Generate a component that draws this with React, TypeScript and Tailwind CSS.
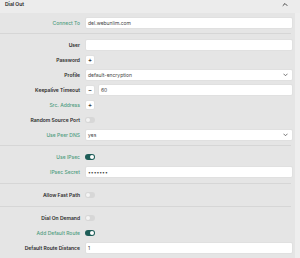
import React from "react";

const GREEN = "text-[#4f9c80] font-medium";
const DARK = "text-[#2a2a2a] font-semibold";

function Row({ label, green, children }: { label: string; green?: boolean; children: React.ReactNode }) {
  return (
    <div className="flex items-center h-[12px]">
      <div className={`w-[80px] text-right text-[5px] leading-[8px] whitespace-nowrap ${green ? GREEN : DARK}`}>{label}</div>
      <div className="ml-[5px] flex-1 flex items-center h-full">{children}</div>
    </div>
  );
}

function Input({ value, select }: { value?: string; select?: boolean }) {
  return (
    <div className="flex-1 h-[12px] bg-white rounded-[2px] border border-[#e0e0e0] flex items-center justify-between pl-[2px] pr-[4px] text-[5px] text-[#444]">
      <span className="leading-[8px]">{value}</span>
      {select && (
        <svg width="5" height="4" viewBox="0 0 10 8" className="text-[#555]">
          <path d="M1.5 2 L5 5.5 L8.5 2" fill="none" stroke="currentColor" strokeWidth="1.6" strokeLinecap="round" />
        </svg>
      )}
    </div>
  );
}

function SmallBtn({ sym }: { sym: string }) {
  return (
    <div className="w-[10px] h-[10px] bg-white rounded-[2px] border border-[#e0e0e0] flex items-center justify-center text-[6px] leading-none text-[#333] font-semibold">
      {sym}
    </div>
  );
}

function Toggle({ on }: { on?: boolean }) {
  return on ? (
    <div className="w-[10px] h-[6px] rounded-full bg-[#1e5d58] flex items-center justify-end pr-[1px]">
      <div className="w-[4px] h-[4px] rounded-full bg-white" />
    </div>
  ) : (
    <div className="w-[10px] h-[6px] rounded-full bg-[#d7d7d7] flex items-center pl-[1px]">
      <div className="w-[4px] h-[4px] rounded-full bg-[#f4f4f4]" />
    </div>
  );
}

function Sep({ wide }: { wide?: boolean }) {
  return <div className={`h-px bg-[#d6d6d6] mr-[2px] ${wide ? "mt-[5px] mb-[5px]" : "mt-[4px] mb-[5px]"}`} />;
}

export default function App() {
  return (
    <div className="w-[300px] h-[258px] overflow-hidden bg-[#ededed] flex flex-col font-['Inter',sans-serif]">
      <div className="h-[13px] flex items-start justify-between pl-[5px] pr-[12px] bg-[#ececec] shrink-0">
        <span className="text-[5px] leading-[8px] font-semibold text-[#222]">Dial Out</span>
        <svg width="6" height="5" viewBox="0 0 12 10" className="mt-[2px] text-[#444]">
          <path d="M2 7 L6 3 L10 7" fill="none" stroke="currentColor" strokeWidth="2" strokeLinecap="round" />
        </svg>
      </div>
      <div className="flex flex-1">
        <div className="w-[295px] bg-[#e5e5e5] pt-[4px] pr-[2px] flex flex-col">
          <div className="flex flex-col gap-[3px]">
            <Row label="Connect To" green><Input value="del.webunlim.com" /></Row>
          </div>
          <Sep />
          <div className="flex flex-col gap-[3px]">
            <Row label="User"><Input /></Row>
            <Row label="Password"><SmallBtn sym="+" /></Row>
            <Row label="Profile"><Input value="default-encryption" select /></Row>
            <Row label="Keepalive Timeout">
              <div className="flex items-center gap-[3px] flex-1">
                <SmallBtn sym="−" />
                <Input value="60" />
              </div>
            </Row>
            <Row label="Src. Address" green><SmallBtn sym="+" /></Row>
            <Row label="Random Source Port"><Toggle /></Row>
            <Row label="Use Peer DNS" green><Input value="yes" select /></Row>
          </div>
          <Sep />
          <div className="flex flex-col gap-[3px]">
            <Row label="Use IPsec" green><Toggle on /></Row>
            <Row label="IPsec Secret" green><Input value="•••••••" /></Row>
          </div>
          <Sep wide />
          <div className="flex flex-col gap-[3px]">
            <Row label="Allow Fast Path"><Toggle /></Row>
          </div>
          <Sep wide />
          <div className="flex flex-col gap-[3px]">
            <Row label="Dial On Demand"><Toggle /></Row>
            <Row label="Add Default Route" green><Toggle on /></Row>
            <Row label="Default Route Distance"><Input value="1" /></Row>
          </div>
        </div>
        <div className="flex-1 bg-[#eeeeee]" />
      </div>
    </div>
  );
}
